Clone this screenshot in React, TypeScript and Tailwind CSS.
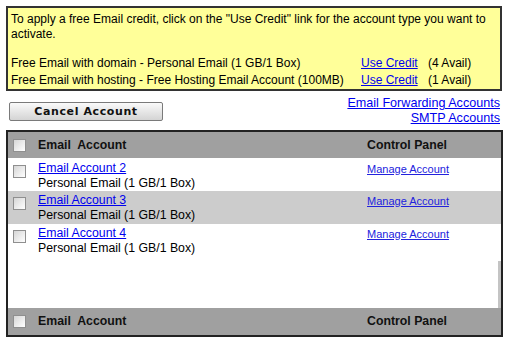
import React from 'react';

const Check: React.FC = () => (
  <span className="inline-block w-[13px] h-[13px] border border-[#8f8f8f] bg-gradient-to-br from-[#d6d6d6] to-[#ffffff]" />
);

const rows = [
  { name: 'Email Account 2', plan: 'Personal Email (1 GB/1 Box)', bg: 'bg-white', pt: 'pt-[3px]' },
  { name: 'Email Account 3', plan: 'Personal Email (1 GB/1 Box)', bg: 'bg-[#cccccc]', pt: 'pt-[2px]' },
  { name: 'Email Account 4', plan: 'Personal Email (1 GB/1 Box)', bg: 'bg-white', pt: 'pt-[2px]' },
];

const HeaderRow: React.FC<{ className?: string }> = ({ className }) => (
  <div className={`flex items-center bg-[#a0a0a0] font-bold text-[#111] whitespace-nowrap ${className ?? ''}`}>
    <div className="w-[30px] pl-[5px] flex items-center">
      <Check />
    </div>
    <div className="w-[329px]">Email&nbsp; Account</div>
    <div>Control Panel</div>
  </div>
);

export default function App() {
  return (
    <div className="w-[507px] h-[341px] overflow-hidden bg-white pl-[6px] pt-[6px] text-[12.3px] leading-[15px] text-black font-['Liberation_Sans',Arial,sans-serif]">
      <div className="w-[496px] h-[85px] border-2 border-[#333] bg-[#ffff99] px-[3px] pt-[4px] text-[12px] whitespace-nowrap">
        <div>
          To apply a free Email credit, click on the "Use Credit" link for the account type you want to
          <br />
          activate.
        </div>
        <div className="mt-[13px]">
          <div className="flex h-[17px] items-center">
            <div className="w-[350px]">Free Email with domain - Personal Email (1 GB/1 Box)</div>
            <a href="#" className="w-[67px] text-[#0000ee] underline">Use Credit</a>
            <div>(4 Avail)</div>
          </div>
          <div className="flex h-[17px] items-center">
            <div className="w-[350px]">Free Email with hosting - Free Hosting Email Account (100MB)</div>
            <a href="#" className="w-[67px] text-[#0000ee] underline">Use Credit</a>
            <div>(1 Avail)</div>
          </div>
        </div>
      </div>

      <div className="w-[496px] h-[39px] flex justify-between">
        <button className="ml-[3px] mt-[11px] w-[154px] h-[19px] border border-[#7a7a7a] rounded-[2px] bg-gradient-to-b from-[#fafafa] to-[#d4d4d4] text-[11px] font-bold tracking-[0.6px] text-[#111] font-['DejaVu_Sans',Verdana,sans-serif] leading-[17px]">
          Cancel Account
        </button>
        <div className="mt-[5px] pr-[2px] flex flex-col items-end text-[12.6px] whitespace-nowrap">
          <a href="#" className="text-[#0000ee] underline">Email Forwarding Accounts</a>
          <a href="#" className="text-[#0000ee] underline">SMTP Accounts</a>
        </div>
      </div>

      <div className="w-[497px] border-2 border-[#222]">
        <HeaderRow className="h-[26px]" />
        <div className="relative h-[150px] bg-white">
          {rows.map((r) => (
            <div key={r.name} className={`flex h-[33px] whitespace-nowrap ${r.bg} ${r.pt}`}>
              <div className="w-[30px] pl-[5px] pt-[4px]">
                <Check />
              </div>
              <div className="w-[329px]">
                <a href="#" className="text-[#0000ee] underline">{r.name}</a>
                <div>{r.plan}</div>
              </div>
              <div className="pt-[1px]">
                <a href="#" className="text-[11px] leading-[14px] text-[#2222dd] underline">Manage Account</a>
              </div>
            </div>
          ))}
          <div className="absolute right-0 bottom-0 w-[3px] h-[47px] bg-[#c4c4c4]" />
        </div>
        <HeaderRow className="h-[27px]" />
      </div>
    </div>
  );
}
